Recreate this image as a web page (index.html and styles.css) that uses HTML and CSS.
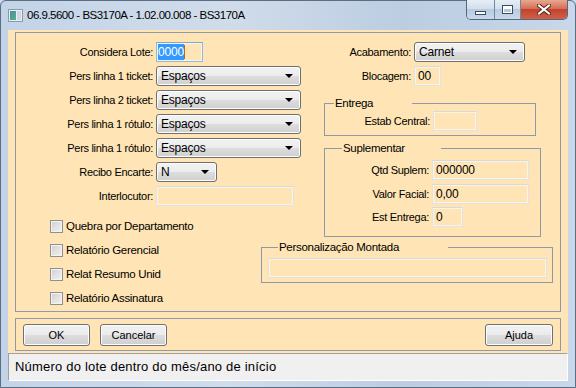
FILE: index.html
```html
<!DOCTYPE html>
<html lang="pt-BR">
<head>
    <meta charset="UTF-8">
    <title>06.9.5600 - BS3170A - 1.02.00.008 - BS3170A</title>
    <link rel="stylesheet" href="styles.css">
</head>
<body>

<div class="window">
    <div class="titlebar">
        <svg class="app-icon" width="15" height="13" viewBox="0 0 15 13">
            <defs>
                <linearGradient id="ic" x1="0" y1="0" x2="1" y2="1">
                    <stop offset="0" stop-color="#3f8fb0"/>
                    <stop offset="1" stop-color="#5fae7c"/>
                </linearGradient>
            </defs>
            <rect x="0.5" y="0.5" width="14" height="12" fill="#e9eef3" stroke="#8c99a6"/>
            <rect x="2" y="2" width="6" height="9" fill="url(#ic)"/>
            <rect x="9" y="2" width="4" height="9" fill="#cfd8e0"/>
        </svg>
        <span class="title">06.9.5600 - BS3170A - 1.02.00.008 - BS3170A</span>
        <div class="caption-buttons">
            <span class="cap cap-min"><span class="glyph-min"></span></span>
            <span class="cap cap-max"><span class="glyph-max"></span></span>
            <span class="cap cap-close">
                <svg width="14" height="11" viewBox="0 0 14 11">
                    <path d="M2 1.5 L12 9.5 M12 1.5 L2 9.5" stroke="#5a2418" stroke-width="4" stroke-linecap="square"/>
                    <path d="M2 1.5 L12 9.5 M12 1.5 L2 9.5" stroke="#ffffff" stroke-width="2" stroke-linecap="square"/>
                </svg>
            </span>
        </div>
    </div>

    <div class="client">
        <div class="panel main-panel">

            <div class="fields">
                <label>Considera Lote:</label>
                <span class="edit focused w-lote"><span class="selected">0000</span><span class="caret"></span></span>

                <label>Pers linha 1 ticket:</label>
                <span class="combo w-pers">Espaços</span>

                <label>Pers linha 2 ticket:</label>
                <span class="combo w-pers">Espaços</span>

                <label>Pers linha 1 rótulo:</label>
                <span class="combo w-pers">Espaços</span>

                <label>Pers linha 1 rótulo:</label>
                <span class="combo w-pers">Espaços</span>

                <label>Recibo Encarte:</label>
                <span class="combo w-recibo">N</span>

                <label>Interlocutor:</label>
                <span class="edit w-interloc"></span>

                <div class="check first-check"><span class="box"></span>Quebra por Departamento</div>
            </div>

            <div class="right">
                <div class="form-grid top-grid">
                    <label>Acabamento:</label>
                    <span class="combo w-acab">Carnet</span>
                    <label>Blocagem:</label>
                    <span class="edit w-bloc">00</span>
                </div>

                <fieldset class="group entrega">
                    <legend>Entrega</legend>
                    <div class="form-grid">
                        <label>Estab Central:</label>
                        <span class="edit w-estab"></span>
                    </div>
                </fieldset>

                <fieldset class="group suplementar">
                    <legend>Suplementar</legend>
                    <div class="form-grid">
                        <label>Qtd Suplem:</label>
                        <span class="edit w-qtd">000000</span>
                        <label>Valor Facial:</label>
                        <span class="edit w-qtd">0,00</span>
                        <label>Est Entrega:</label>
                        <span class="edit w-est">0</span>
                    </div>
                </fieldset>
            </div>

            <div class="checks">
                <div class="check"><span class="box"></span>Relatório Gerencial</div>
                <div class="check"><span class="box"></span>Relat Resumo Unid</div>
                <div class="check"><span class="box"></span>Relatório Assinatura</div>
            </div>

            <fieldset class="group montada">
                <legend>Personalização Montada</legend>
                <span class="edit w-mont"></span>
            </fieldset>
        </div>

        <div class="panel button-panel">
            <button>OK</button>
            <button>Cancelar</button>
            <button class="help">Ajuda</button>
        </div>

        <div class="status">Número do lote dentro do mês/ano de início</div>
    </div>
</div>

</body>
</html>
```

FILE: styles.css
```css
* {
    box-sizing: border-box;
}

body {
    margin: 0;
    font-family: "Liberation Sans", Arial, sans-serif;
    font-size: 11px;
    color: #000;
    background: #c9d8ea;
}

/* janela (moldura estilo Windows 7) */
.window {
    width: 576px;
    height: 388px;
    display: flex;
    flex-direction: column;
    padding: 0 7px 6px;
    border: 1px solid #5d6e84;
    border-radius: 6px 6px 0 0;
    background: linear-gradient(90deg, #c3d4e8 0%, #d0dcea 40%, #bccde2 70%, #c8d7e9 100%);
}

.titlebar {
    height: 29px;
    display: flex;
    align-items: flex-start;
    flex-shrink: 0;
}

.app-icon {
    margin-top: 8px;
}

.title {
    margin: 8px 0 0 4px;
    font-size: 11.5px;
    letter-spacing: -0.5px;
    color: #000;
}

.caption-buttons {
    margin-left: auto;
    margin-top: -1px;
    display: flex;
    height: 20px;
    border: 1px solid #56687f;
    border-top: none;
    border-radius: 0 0 5px 5px;
    overflow: hidden;
}

.cap {
    display: flex;
    align-items: center;
    justify-content: center;
    height: 100%;
    background: linear-gradient(#e7eef6, #d3dfec 45%, #b8cbe0 50%, #c9d9eb);
    border-right: 1px solid #7486a0;
}

.cap-min {
    width: 28px;
}

.cap-max {
    width: 26px;
}

.cap-close {
    width: 46px;
    border-right: none;
    background: linear-gradient(#e9a792, #d46f58 45%, #c3432c 50%, #d0604a);
}

.glyph-min {
    width: 11px;
    height: 4px;
    margin-top: 6px;
    background: #fff;
    border: 1px solid #3b4b60;
}

.glyph-max {
    width: 11px;
    height: 9px;
    border: 1px solid #3b4b60;
    box-shadow: inset 0 0 0 1px #fff, inset 0 2px 0 1px #fff;
    background: #b8c9dc;
}

/* area cliente */
.client {
    flex: 1;
    display: flex;
    flex-direction: column;
    background: #ffe4b5;
}

.panel {
    border: 1px solid #8e9aaa;
}

.main-panel {
    height: 280px;
    margin: 2px 7px 0;
    display: grid;
    grid-template-columns: 245px 50px 1fr;
    grid-template-rows: 205px 1fr;
    grid-template-areas:
        "fields fields right"
        "checks mont mont";
}

label {
    text-align: right;
    line-height: 20px;
    letter-spacing: -0.3px;
    white-space: nowrap;
}

.fields {
    grid-area: fields;
    padding-top: 9px;
    display: grid;
    grid-template-columns: 137px auto;
    grid-auto-rows: 20px;
    column-gap: 3px;
    row-gap: 4px;
    align-content: start;
    justify-items: start;
}

.fields label {
    justify-self: end;
}

/* campos */
.edit {
    display: block;
    height: 20px;
    padding: 0 3px;
    line-height: 18px;
    font-size: 12px;
    border: 1px solid #e2e2e2;
    border-top-color: #d9d9d9;
    box-shadow: inset 0 0 0 1px #fbf3e4;
    letter-spacing: -0.2px;
}

.edit.focused {
    border-color: #8fb8e2;
    border-top-color: #7aa8d8;
    padding-left: 1px;
}

.selected {
    background: #3399ff;
    color: #fff;
    padding: 1px 0;
}

.caret {
    display: inline-block;
    width: 1px;
    height: 14px;
    vertical-align: -3px;
    background: #c0641a;
}

.combo {
    display: block;
    position: relative;
    height: 20px;
    padding: 0 4px;
    line-height: 19px;
    font-size: 12px;
    letter-spacing: -0.2px;
    border: 1px solid #707070;
    border-radius: 3px;
    background: linear-gradient(#f3f3f3, #ebebeb 50%, #dddddd 51%, #d0d0d0);
    box-shadow: inset 0 0 0 1px #fcfcfc;
}

.combo::after {
    content: "";
    position: absolute;
    right: 7px;
    top: 7px;
    border-left: 4px solid transparent;
    border-right: 4px solid transparent;
    border-top: 4px solid #000;
}

.w-lote { width: 47px; }
.w-pers { width: 145px; }
.w-recibo { width: 61px; }
.w-interloc { width: 138px; }
.w-acab { width: 111px; }
.w-bloc { width: 27px; }
.w-estab { width: 44px; }
.w-qtd { width: 97px; }
.w-est { width: 31px; }
.w-mont { width: 279px; }

/* checkboxes */
.check {
    height: 24px;
    display: flex;
    align-items: center;
    gap: 3px;
    padding-left: 34px;
    font-size: 11.5px;
    letter-spacing: -0.3px;
    white-space: nowrap;
}

.first-check {
    grid-column: 1 / 3;
    margin-top: 4px;
}

.box {
    width: 13px;
    height: 13px;
    flex-shrink: 0;
    border: 1px solid #8e8f8f;
    background: linear-gradient(135deg, #cfcfcf, #f4f4f4);
    box-shadow: inset 0 0 0 1px #f4f4f4;
}

.checks {
    grid-area: checks;
}

/* coluna direita */
.right {
    grid-area: right;
    padding-top: 9px;
}

.form-grid {
    display: grid;
    column-gap: 3px;
    row-gap: 4px;
    justify-items: start;
}

.form-grid label {
    justify-self: end;
}

.top-grid {
    grid-template-columns: 100px auto;
}

.group {
    margin: 0;
    padding: 0;
    border: 1px solid #8e9aaa;
    min-width: 0;
}

.group legend {
    padding: 0 0 0 1px;
    line-height: 14px;
    font-size: 11.5px;
    letter-spacing: -0.3px;
    white-space: nowrap;
}

.entrega {
    width: 212px;
    margin: 10px 0 0 13px;
    padding: 1px 0 4px;
}

.entrega legend {
    width: 78px;
    margin-left: 9px;
}

.entrega .form-grid {
    grid-template-columns: 105px auto;
}

.suplementar {
    width: 217px;
    margin: 5px 0 0 13px;
    padding: 5px 0 9px;
}

.suplementar legend {
    width: 99px;
    margin-left: 17px;
}

.suplementar .form-grid {
    grid-template-columns: 104px auto;
    row-gap: 3.5px;
}

.montada {
    grid-area: mont;
    align-self: start;
    width: 292px;
    margin-top: 2px;
    padding: 4px 5px 4px 6px;
}

.montada legend {
    width: 170px;
    margin-left: 10px;
}

/* botoes */
.button-panel {
    margin: 6px 7px 0;
    padding: 5px 7px 4px;
    display: flex;
    gap: 10px;
}

button {
    width: 67px;
    height: 22px;
    padding: 0;
    font-family: "Liberation Sans", Arial, sans-serif;
    font-size: 11px;
    color: #000;
    border: 1px solid #707070;
    border-radius: 3px;
    background: linear-gradient(#f2f2f2, #ebebeb 50%, #dddddd 51%, #cfcfcf);
    box-shadow: inset 0 0 0 1px #fcfcfc;
}

button.help {
    margin-left: auto;
    width: 68px;
}

.status {
    margin-top: 2px;
    flex: 1;
    padding: 5px 0 0 6px;
    font-size: 13px;
    letter-spacing: 0.2px;
    background: #f0f0f0;
    border-top: 1px solid #a0a0a0;
    border-left: 1px solid #a0a0a0;
    border-right: 1px solid #ffffff;
    border-bottom: 1px solid #ffffff;
}
```
